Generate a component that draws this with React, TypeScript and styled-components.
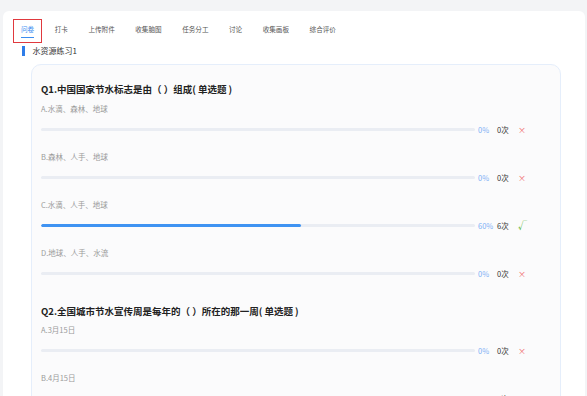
import styled, { createGlobalStyle } from "styled-components";

const GlobalStyle = createGlobalStyle`
  html, body {
    margin: 0;
    padding: 0;
    background: #f3f4f6;
    font-family: "Noto Sans CJK SC", "Noto Sans", sans-serif;
  }
`;

const Page = styled.div`
  padding: 11px 2px 0 3px;
  height: 396px;
  box-sizing: border-box;
  overflow: hidden;
`;

const Panel = styled.div`
  background: #ffffff;
  border-radius: 6px 6px 0 0;
  min-height: 385px;
  padding: 8px 24px 0 10px;
  box-sizing: border-box;
`;

const Tabs = styled.div`
  display: flex;
  gap: 4.5px;
`;

const Tab = styled.div<{ $active?: boolean; $marked?: boolean }>`
  display: flex;
  flex-direction: column;
  align-items: center;
  padding: 5px 7px 4px;
  border: 1px solid ${(p) => (p.$marked ? "#e0393e" : "transparent")};
  color: ${(p) => (p.$active ? "#3b8cf0" : "#555")};
  font-size: 6.6px;
  line-height: 9px;
  white-space: nowrap;
`;

const TabLine = styled.div<{ $active?: boolean }>`
  align-self: stretch;
  height: 1px;
  margin-top: 3px;
  background: ${(p) => (p.$active ? "#3b8cf0" : "transparent")};
`;

const SectionTitle = styled.div`
  display: flex;
  align-items: center;
  gap: 8px;
  margin: 3px 0 0 9px;
  font-size: 8px;
  line-height: 10px;
  color: #333;
  &::before {
    content: "";
    width: 2.5px;
    height: 10px;
    background: #2f7de8;
  }
`;

const Card = styled.div`
  margin: 8px 0 0 18px;
  background: #fbfbfc;
  border: 1px solid #e5eefb;
  border-radius: 10px;
  padding: 19px 36px 0 9px;
  min-height: 400px;
`;

const Question = styled.div`
  & + & {
    margin-top: 27px;
  }
`;

const QTitle = styled.div`
  font-size: 9.5px;
  line-height: 10px;
  font-weight: 700;
  color: #222;
  margin-bottom: 9.5px;
`;

const Option = styled.div`
  & + & {
    margin-top: 17.7px;
  }
`;

const OptLabel = styled.div`
  font-size: 7.5px;
  line-height: 10px;
  color: #9a9a9a;
`;

const BarRow = styled.div`
  display: flex;
  align-items: center;
  height: 10px;
  margin-top: 10.5px;
  font-size: 7.5px;
`;

const Track = styled.div`
  flex: 1;
  height: 3px;
  border-radius: 2px;
  background: #eaedf3;
  overflow: hidden;
`;

const Fill = styled.div`
  height: 100%;
  border-radius: 2px;
  background: #3f93f2;
`;

const Percent = styled.span`
  width: 19px;
  margin-left: 3px;
  color: #7eb0f5;
`;

const Count = styled.span`
  width: 21px;
  color: #333;
`;

const Mark = styled.span<{ $right?: boolean }>`
  width: 6px;
  font-size: ${(p) => (p.$right ? "9px" : "8px")};
  color: ${(p) => (p.$right ? "#5cb83a" : "#f06a6a")};
`;

const tabs = ["问卷", "打卡", "上传附件", "收集脑图", "任务分工", "讨论", "收集画板", "综合评价"];

const questions = [
  {
    title: "Q1.中国国家节水标志是由（ ）组成( 单选题 )",
    options: [
      { label: "A.水滴、森林、地球", pct: 0, count: 0, right: false },
      { label: "B.森林、人手、地球", pct: 0, count: 0, right: false },
      { label: "C.水滴、人手、地球", pct: 60, count: 6, right: true },
      { label: "D.地球、人手、水流", pct: 0, count: 0, right: false },
    ],
  },
  {
    title: "Q2.全国城市节水宣传周是每年的（ ）所在的那一周( 单选题 )",
    options: [
      { label: "A.3月15日", pct: 0, count: 0, right: false },
      { label: "B.4月15日", pct: 0, count: 0, right: false },
    ],
  },
];

const App = () => {
  return (
    <Page>
      <GlobalStyle />
      <Panel>
        <Tabs>
          {tabs.map((t, i) => (
            <Tab key={t} $active={i === 0} $marked={i === 0}>
              {t}
              <TabLine $active={i === 0} />
            </Tab>
          ))}
        </Tabs>
        <SectionTitle>水资源练习1</SectionTitle>
        <Card>
          {questions.map((q) => (
            <Question key={q.title}>
              <QTitle>{q.title}</QTitle>
              {q.options.map((o) => (
                <Option key={o.label}>
                  <OptLabel>{o.label}</OptLabel>
                  <BarRow>
                    <Track>
                      <Fill style={{ width: `${o.pct}%` }} />
                    </Track>
                    <Percent>{o.pct}%</Percent>
                    <Count>{o.count}次</Count>
                    <Mark $right={o.right}>{o.right ? "√" : "×"}</Mark>
                  </BarRow>
                </Option>
              ))}
            </Question>
          ))}
        </Card>
      </Panel>
    </Page>
  );
};

export default App;
